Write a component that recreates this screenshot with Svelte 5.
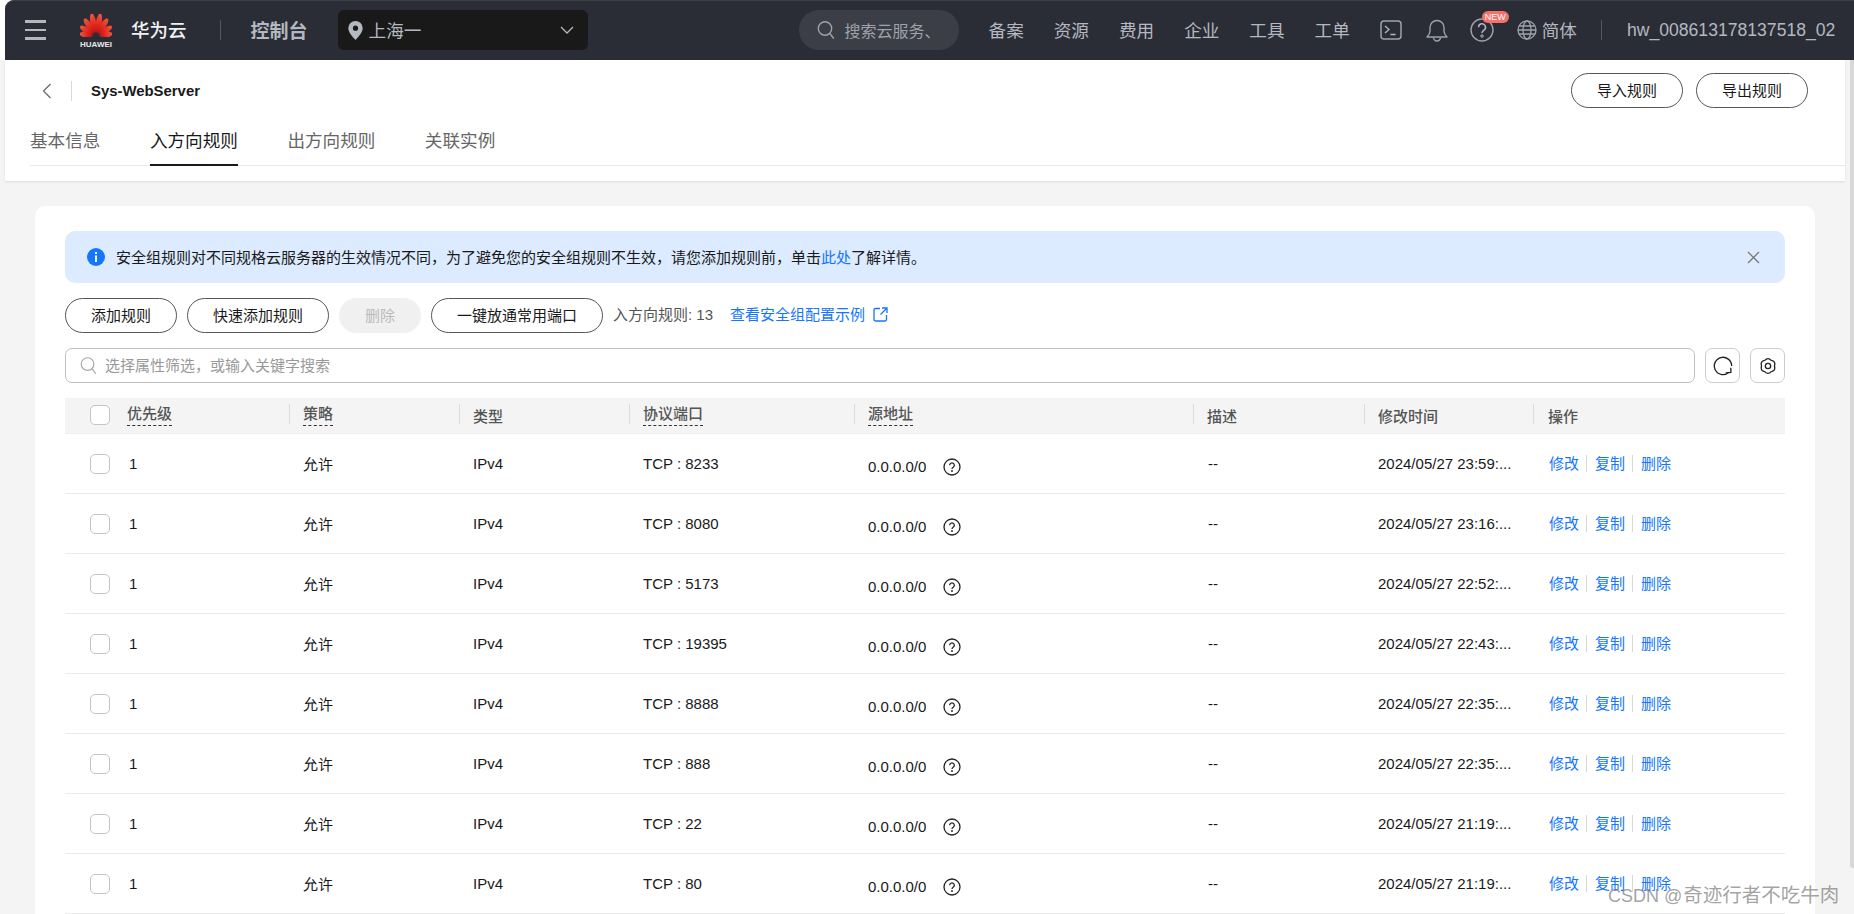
<script>
  const petals = [
    { a: -80, l: 16 }, { a: -57, l: 18.5 }, { a: -33, l: 21 }, { a: -11, l: 23 },
    { a: 11, l: 23 }, { a: 33, l: 21 }, { a: 57, l: 18.5 }, { a: 80, l: 16 }
  ];
  const menu = ['备案', '资源', '费用', '企业', '工具', '工单'];
  const tabs = ['基本信息', '入方向规则', '出方向规则', '关联实例'];
  const rows = [
    ['8233', '23:59'], ['8080', '23:16'], ['5173', '22:52'], ['19395', '22:43'],
    ['8888', '22:35'], ['888', '22:35'], ['22', '21:19'], ['80', '21:19']
  ];
</script>

<div class="page">
  <div class="navwrap">
    <nav class="nav">
      <div class="burger"><i></i><i></i><i></i></div>
      <div class="logo">
        <svg width="32" height="25" viewBox="0 0 32 25">
          <defs>
            <linearGradient id="pg" x1="0" y1="0" x2="0" y2="1">
              <stop offset="0" stop-color="#f0573f" />
              <stop offset="0.6" stop-color="#e0241a" />
              <stop offset="1" stop-color="#b8141a" />
            </linearGradient>
          </defs>
          {#each petals as p}
            <g transform="translate(16 24.5) rotate({p.a}) translate(0 -3)">
              <path fill="url(#pg)" d="M0 0C-3.4 -{p.l * 0.3} -3.8 -{p.l * 0.62} -1.2 -{p.l - 3}Q0 -{p.l - 2.6} 1.2 -{p.l - 3}C3.8 -{p.l * 0.62} 3.4 -{p.l * 0.3} 0 0Z" />
            </g>
          {/each}
        </svg>
        <span>HUAWEI</span>
      </div>
      <span class="brand">华为云</span>
      <span class="vline brand-line"></span>
      <span class="console">控制台</span>
      <div class="region">
        <svg class="pin" width="17" height="19" viewBox="0 0 17 19"><path fill="#b4b8c0" fill-rule="evenodd" d="M8.5 0a7.2 7.2 0 0 1 7.2 7.2c0 4-4.4 8.7-7.2 11.8C5.700 15.900 1.300 11.200 1.300 7.200A7.200 7.200 0 0 1 8.500 0zm0 4.600a2.600 2.600 0 1 0 0 5.200 2.600 2.600 0 0 0 0-5.200z" /></svg>
        <span class="region-text">上海一</span>
        <svg class="chev" width="14" height="8" viewBox="0 0 14 8"><path d="M1 1l6 6 6-6" fill="none" stroke="#b4b8c0" stroke-width="1.300" /></svg>
      </div>
      <div class="search">
        <svg width="18" height="20" viewBox="0 0 18 20"><circle cx="8" cy="8.500" r="6.700" fill="none" stroke="#9ea2aa" stroke-width="1.400" /><path d="M12.800 13.500l4 5" stroke="#9ea2aa" stroke-width="1.400" /></svg>
        <span>搜索云服务、</span>
      </div>
      <div class="menu">
        {#each menu as m}<span>{m}</span>{/each}
      </div>
      <svg class="i-term" width="22" height="20" viewBox="0 0 22 20"><rect x="1" y="1" width="20" height="18" rx="3" fill="none" stroke="#9ea2aa" stroke-width="1.500" /><path d="M5 6l4 3.500-4 3.500M10.500 14.500h5" fill="none" stroke="#b4b8c0" stroke-width="1.300" /></svg>
      <svg class="i-bell" width="22" height="23" viewBox="0 0 22 23"><path d="M1 18h20c-2-2-3-3.500-3-6V8.500a7 7 0 0 0-14 0V12c0 2.500-1 4-3 6z" fill="none" stroke="#9ea2aa" stroke-width="1.400" stroke-linejoin="round" /><path d="M7.500 18.500a3.500 3.500 0 0 0 7 0" fill="none" stroke="#9ea2aa" stroke-width="1.400" /></svg>
      <div class="help">
        <svg width="24" height="24" viewBox="0 0 24 24"><circle cx="12" cy="12" r="11" fill="none" stroke="#9ea2aa" stroke-width="1.400" /><path d="M8.500 9.300a3.500 3.500 0 1 1 5.200 3c-1.200.7-1.700 1.400-1.700 2.700" fill="none" stroke="#b4b8c0" stroke-width="1.500" /><circle cx="12" cy="18" r="1.200" fill="none" stroke="#b4b8c0" stroke-width="1" /></svg>
        <span class="new">NEW</span>
      </div>
      <svg class="i-globe" width="20" height="20" viewBox="0 0 20 20"><g fill="none" stroke="#9ea2aa" stroke-width="1.300"><circle cx="10" cy="10" r="9" /><ellipse cx="10" cy="10" rx="4" ry="9" /><path d="M1 10h18M2.200 6h15.600M2.200 14h15.600" /></g></svg>
      <span class="lang">简体</span>
      <span class="vline user-line"></span>
      <span class="user">hw_008613178137518_02</span>
    </nav>
  </div>

  <div class="head">
    <div class="head-top">
      <svg class="back" width="10" height="16" viewBox="0 0 10 16"><path d="M8.500 1L1.500 8l7 7" fill="none" stroke="#666" stroke-width="1.200" /></svg>
      <span class="head-line"></span>
      <span class="name">Sys-WebServer</span>
      <button class="btn head-btn first">导入规则</button>
      <button class="btn head-btn">导出规则</button>
    </div>
    <div class="tabs">
      {#each tabs as t, i}
        <span class="tab" class:active={i === 1}>{t}</span>
      {/each}
    </div>
  </div>

  <main class="card">
    <div class="alert">
      <svg width="18" height="18" viewBox="0 0 18 18"><circle cx="9" cy="9" r="9" fill="#1476ff" /><rect x="8" y="7.500" width="2" height="6.500" fill="#fff" /><rect x="8" y="4" width="2" height="2" fill="#fff" /></svg>
      <span class="alert-text">安全组规则对不同规格云服务器的生效情况不同，为了避免您的安全组规则不生效，请您添加规则前，单击<a href="#top">此处</a>了解详情。</span>
      <svg class="close" width="13" height="13" viewBox="0 0 13 13"><path d="M1 1l11 11M12 1L1 12" stroke="#777" stroke-width="1.300" /></svg>
    </div>

    <div class="toolbar">
      <button class="btn w112">添加规则</button>
      <button class="btn w142">快速添加规则</button>
      <button class="btn w82 disabled">删除</button>
      <button class="btn w172">一键放通常用端口</button>
      <span class="count">入方向规则: 13</span>
      <a class="example" href="#top">查看安全组配置示例</a>
      <svg class="ext" width="15" height="15" viewBox="0 0 15 15"><path d="M7 1.500H2.500a1.500 1.500 0 0 0-1.500 1.500v9.500a1.500 1.500 0 0 0 1.500 1.500h9.500a1.500 1.500 0 0 0 1.500-1.500V8M9 1h5v5M14 1L7.500 7.500" fill="none" stroke="#1476ff" stroke-width="1.300" /></svg>
    </div>

    <div class="filter">
      <div class="filter-input">
        <svg width="17" height="19" viewBox="0 0 18 20"><circle cx="8" cy="8.500" r="6.700" fill="none" stroke="#aaa" stroke-width="1.300" /><path d="M12.800 13.500l4 5" stroke="#aaa" stroke-width="1.300" /></svg>
        <span>选择属性筛选，或输入关键字搜索</span>
      </div>
      <div class="sq">
        <svg width="20" height="20" viewBox="0 0 18 18"><path d="M14.500 14.500A7.800 7.800 0 1 1 16.800 9" fill="none" stroke="#222" stroke-width="1.200" /><path d="M11.500 15.200l4.600-.4-.1-4.300" fill="none" stroke="#222" stroke-width="1.200" /></svg>
      </div>
      <div class="sq">
        <svg width="20" height="20" viewBox="0 0 24 24"><path fill="none" stroke="#222" stroke-width="1.600" d="M8.100 5.250Q12 1 15.900 5.250Q21.500 6 19.800 12Q21.500 18 15.900 18.750Q12 23 8.100 18.750Q2.500 18 4.200 12Q2.500 6 8.100 5.250Z" /><circle cx="12" cy="12" r="3.200" fill="none" stroke="#222" stroke-width="1.600" /></svg>
      </div>
    </div>

    <div class="table">
      <div class="row thead">
        <div class="cell first"><span class="check"></span><span class="dash">优先级</span></div>
        <div class="cell sep"><span class="dash">策略</span></div>
        <div class="cell sep"><span>类型</span></div>
        <div class="cell sep"><span class="dash">协议端口</span></div>
        <div class="cell sep"><span class="dash">源地址</span></div>
        <div class="cell sep"><span>描述</span></div>
        <div class="cell sep"><span>修改时间</span></div>
        <div class="cell sep"><span>操作</span></div>
      </div>
      {#each rows as r}
        <div class="row tbody">
          <div class="cell first"><span class="check"></span><span class="one">1</span></div>
          <div class="cell">允许</div>
          <div class="cell">IPv4</div>
          <div class="cell">TCP : {r[0]}</div>
          <div class="cell addr">
            <span>0.0.0.0/0</span>
            <svg width="18" height="18" viewBox="0 0 18 18"><circle cx="9" cy="9" r="8" fill="none" stroke="#222" stroke-width="1.300" /><path d="M6.700 7.200a2.300 2.300 0 1 1 3.500 2c-.8.500-1.200 1-1.200 1.800" fill="none" stroke="#222" stroke-width="1.300" /><circle cx="9" cy="13" r=".9" fill="#222" /></svg>
          </div>
          <div class="cell dashes">--</div>
          <div class="cell"><span class="date">2024/05/27 {r[1]}:...</span></div>
          <div class="cell ops"><a href="#top">修改</a><i></i><a href="#top">复制</a><i></i><a href="#top">删除</a></div>
        </div>
      {/each}
    </div>
  </main>

  <div class="scroll"></div>
  <div class="mark">CSDN @<span>奇迹行者不吃牛肉</span></div>
</div>

<style>
  :global(body) { margin: 0; overflow: hidden; }
  .page {
    position: relative;
    width: 1854px;
    height: 914px;
    overflow: hidden;
    background: #f4f4f4;
    font-family: "Liberation Sans", "Noto Sans CJK SC", sans-serif;
    font-size: 15px;
    color: #191919;
  }
  a { color: #1476ff; text-decoration: none; }

  .navwrap { background: #fff; padding-left: 5px; height: 60px; }
  .nav {
    height: 60px;
    box-sizing: border-box;
    padding-left: 20px;
    display: flex;
    align-items: center;
    background: #2a2d36;
    box-shadow: inset 0 1px 0 #3d4048;
    border-top-left-radius: 9px;
    color: #b4b8c0;
    font-size: 17.6px;
  }
  .burger { width: 21px; display: flex; flex-direction: column; gap: 6px; }
  .burger i { display: block; height: 2.5px; background: #b4b7bd; }
  .logo {
    margin-left: 34px;
    width: 32px;
    display: flex;
    flex-direction: column;
    align-items: center;
    color: #e8e8e8;
  }
  .logo svg { display: block; }
  .logo span { font-size: 8px; font-weight: 700; line-height: 9px; margin-top: 3px; }
  .brand { margin-left: 19px; color: #f0f0f0; font-size: 18.500px; font-weight: 500; padding-bottom: 2px; }
  .vline { width: 1px; height: 20px; background: #55585f; }
  .brand-line { margin-left: 33px; }
  .console { margin-left: 30px; font-size: 19px; font-weight: 700; padding-bottom: 2px; }
  .region {
    margin-left: 30px;
    width: 250px;
    height: 40px;
    box-sizing: border-box;
    padding: 0 14px 0 9px;
    display: flex;
    align-items: center;
    background: #191919;
    border-radius: 6px;
  }
  .region-text { margin-left: 5px; padding-bottom: 2px; }
  .chev { margin-left: auto; }
  .search {
    margin-left: 211px;
    width: 160px;
    height: 40px;
    box-sizing: border-box;
    padding-left: 18px;
    display: flex;
    align-items: center;
    gap: 10px;
    background: #3b3e46;
    border-radius: 20px;
    color: #9ea2aa;
    white-space: nowrap;
    overflow: hidden;
    font-size: 16px;
  }
  .menu { margin-left: 30px; display: flex; gap: 30px; padding-bottom: 2px; }
  .i-term { margin-left: 30px; }
  .i-bell { margin-left: 24px; }
  .help { position: relative; margin-left: 22px; width: 24px; height: 24px; }
  .help svg { display: block; }
  .new {
    position: absolute;
    left: 12px;
    top: -7px;
    width: 27px;
    height: 12px;
    border-radius: 6px;
    background: #f66f6a;
    color: #fff;
    font-size: 9px;
    line-height: 12px;
    text-align: center;
  }
  .i-globe { margin-left: 23px; }
  .lang { margin-left: 5px; padding-bottom: 2px; }
  .user-line { margin-left: 24px; }
  .user { margin-left: 25px; white-space: nowrap; }

  .head {
    margin-left: 5px;
    width: 1840px;
    height: 121px;
    background: #fff;
    box-shadow: 0 1px 2px rgba(0, 0, 0, 0.1);
  }
  .head-top {
    height: 48px;
    box-sizing: border-box;
    padding: 13px 37px 0;
    display: flex;
    align-items: center;
  }
  .head-line { margin-left: 19px; width: 1px; height: 20px; background: #d8d8d8; }
  .name { margin-left: 19px; font-size: 14.9px; font-weight: 700; }
  .btn {
    height: 35px;
    box-sizing: border-box;
    padding: 0 0 3px;
    border: 1px solid #555;
    border-radius: 18px;
    background: #fff;
    color: #191919;
    font: inherit;
    font-size: 15px;
    text-align: center;
  }
  .head-btn { width: 112px; margin-left: 13px; }
  .head-btn.first { margin-left: auto; }
  .tabs {
    margin-left: 25px;
    height: 58px;
    box-sizing: border-box;
    padding-top: 1px;
    display: flex;
    gap: 49.5px;
    border-bottom: 1px solid #e8e8e8;
  }
  .tab {
    height: 57px;
    box-sizing: border-box;
    line-height: 65px;
    font-size: 17.6px;
    color: #666;
  }
  .tab.active { color: #191919; border-bottom: 2px solid #191919; }

  .card {
    margin: 25px 0 0 35px;
    width: 1780px;
    height: 720px;
    box-sizing: border-box;
    padding: 25px 30px 0;
    background: #fff;
    border-radius: 10px;
  }
  .alert {
    height: 52px;
    box-sizing: border-box;
    padding: 0 25px 0 22px;
    display: flex;
    align-items: center;
    background: #dcebff;
    border-radius: 10px;
  }
  .alert-text { margin-left: 11px; font-size: 15px; padding-bottom: 2px; }
  .close { margin-left: auto; }
  .toolbar { margin-top: 15px; height: 35px; display: flex; align-items: center; gap: 10px; }
  .w112 { width: 112px; }
  .w142 { width: 142px; }
  .w82 { width: 82px; }
  .w172 { width: 172px; }
  .disabled { background: #f0f0f0; border-color: #f0f0f0; color: #bbb; }
  .count { color: #555; font-size: 15px; padding-bottom: 4px; }
  .example { margin-left: 7px; font-size: 15px; padding-bottom: 4px; }
  .ext { margin-left: -2px; padding-bottom: 3px; }

  .filter { margin-top: 15px; height: 35px; display: flex; gap: 10px; }
  .filter-input {
    flex: 1;
    box-sizing: border-box;
    padding-left: 14px;
    display: flex;
    align-items: center;
    gap: 8px;
    border: 1px solid #c0c0c0;
    border-radius: 7px;
    color: #999;
  }
  .filter-input span { padding-bottom: 3px; }
  .sq {
    width: 35px;
    box-sizing: border-box;
    display: flex;
    align-items: center;
    justify-content: center;
    border: 1px solid #ccc;
    border-radius: 7px;
  }

  .table { margin-top: 15px; }
  .row {
    display: grid;
    grid-template-columns: 224px 170px 170px 225px 339px 171px 169px 252px;
    align-items: center;
  }
  .thead {
    height: 36px;
    box-sizing: border-box;
    padding-bottom: 1px;
    background: #f4f4f4;
    color: #555;
    font-weight: 500;
    border-bottom: 1px solid #eee;
  }
  .tbody { height: 60px; box-sizing: border-box; border-bottom: 1px solid #eaeaea; }
  .cell { padding-left: 14px; white-space: nowrap; display: flex; align-items: center; }
  .thead .sep { position: relative; }
  .thead .sep::before {
    content: "";
    position: absolute;
    left: 0;
    top: -1px;
    width: 1px;
    height: 20px;
    background: #dcdcdc;
  }
  .thead .sep:last-child { padding-left: 15px; }
  .cell.first { padding-left: 25px; }
  .check {
    width: 20px;
    height: 20px;
    box-sizing: border-box;
    background: #fff;
    border: 1px solid #c4c4c4;
    border-radius: 5px;
  }
  .first .dash { margin-left: 17px; }
  .dash { padding-bottom: 3px; border-bottom: 1px dashed #333; line-height: 17px; }
  .one { margin-left: 19px; }
  .addr { gap: 17px; }
  .addr span { padding-top: 5px; }
  .addr svg { margin-top: 6px; }
  .dashes { padding-left: 15px; }
  .ops { padding-left: 16px; }
  .ops a { line-height: 17px; }
  .ops i { width: 1px; height: 17px; margin: 0 8px 0 7px; background: #d8d8d8; }
  .scroll {
    position: absolute;
    right: 0;
    top: 60px;
    width: 4px;
    height: 808px;
    background: #d8d8d8;
    border-bottom-left-radius: 3px;
  }
  .mark {
    position: absolute;
    left: 1608px;
    top: 881px;
    color: rgba(110, 110, 110, 0.65);
    font-size: 18px;
    line-height: 28px;
    white-space: nowrap;
  }
  .mark span { font-size: 19.500px; margin-left: 1px; }
</style>
